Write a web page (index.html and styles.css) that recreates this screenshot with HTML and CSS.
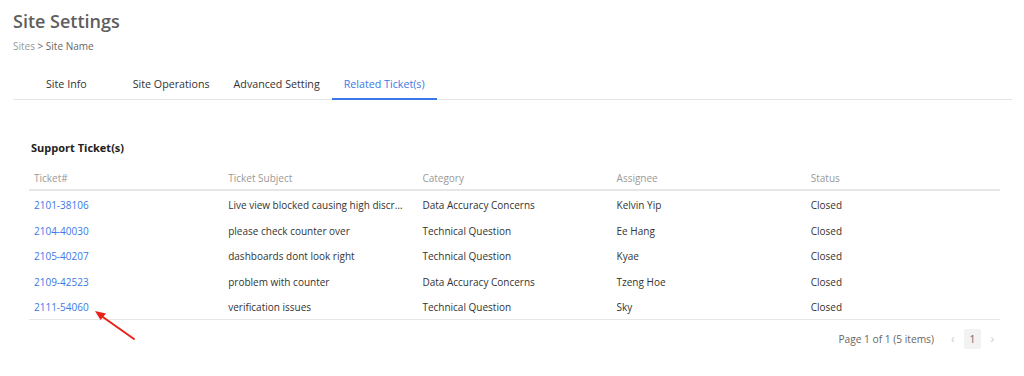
FILE: index.html
```html
<!DOCTYPE html>
<html lang="en">
  <head>
    <meta charset="UTF-8" />
    <meta name="viewport" content="width=device-width, initial-scale=1.0" />
    <title>Site Settings</title>
    <link rel="stylesheet" href="styles.css">
  </head>
  <body>
    <div class="page">
      <h1 class="title">Site Settings</h1>
      <div class="breadcrumb"><span class="crumb-root">Sites</span> &gt; Site Name</div>

      <div class="tabs">
        <div class="tab">Site Info</div>
        <div class="tab">Site Operations</div>
        <div class="tab">Advanced Setting</div>
        <div class="tab active">Related Ticket(s)</div>
      </div>

      <div class="panel">
        <div class="panel-title">Support Ticket(s)</div>
        <table class="grid">
          <thead>
            <tr>
              <th>Ticket#</th>
              <th>Ticket Subject</th>
              <th>Category</th>
              <th>Assignee</th>
              <th>Status</th>
            </tr>
          </thead>
          <tbody>
            <tr>
              <td><a href="#">2101-38106</a></td>
              <td>Live view blocked causing high discrepancy</td>
              <td>Data Accuracy Concerns</td>
              <td>Kelvin Yip</td>
              <td>Closed</td>
            </tr>
            <tr>
              <td><a href="#">2104-40030</a></td>
              <td>please check counter over</td>
              <td>Technical Question</td>
              <td>Ee Hang</td>
              <td>Closed</td>
            </tr>
            <tr>
              <td><a href="#">2105-40207</a></td>
              <td>dashboards dont look right</td>
              <td>Technical Question</td>
              <td>Kyae</td>
              <td>Closed</td>
            </tr>
            <tr>
              <td><a href="#">2109-42523</a></td>
              <td>problem with counter</td>
              <td>Data Accuracy Concerns</td>
              <td>Tzeng Hoe</td>
              <td>Closed</td>
            </tr>
            <tr>
              <td class="marked">
                <a href="#">2111-54060</a>
                <svg class="arrow" width="50" height="36" viewBox="0 0 50 36">
                  <line x1="44" y1="32" x2="10" y2="8" stroke="#e8231b" stroke-width="2" stroke-linecap="round" />
                  <polygon points="5,4 16,6.5 10.5,13" fill="#e8231b" />
                </svg>
              </td>
              <td>verification issues</td>
              <td>Technical Question</td>
              <td>Sky</td>
              <td>Closed</td>
            </tr>
          </tbody>
        </table>

        <div class="pager">
          <span class="pager-info">Page 1 of 1 (5 items)</span>
          <span class="pager-nav">&#8249;</span>
          <span class="pager-page">1</span>
          <span class="pager-nav">&#8250;</span>
        </div>
      </div>
    </div>
  </body>
</html>
```

FILE: styles.css
```css
body {
  margin: 0;
  background-color: #fff;
  font-family: "Open Sans", "Noto Sans", sans-serif;
  color: #333;
}

.page {
  padding: 9px 12px 0 13px;
}

.title {
  margin: 0;
  font-size: 18px;
  font-weight: 600;
  color: #5e5e5e;
  line-height: 24px;
}

.breadcrumb {
  margin-top: 6px;
  font-size: 10px;
  color: #666;
  line-height: 14px;
}

.crumb-root {
  color: #9a9a9a;
}

.tabs {
  display: flex;
  margin-top: 16px;
  border-bottom: 1px solid #e4e4e4;
}

.tab {
  padding: 8px 12px 7px;
  font-size: 10.7px;
  line-height: 14px;
  color: #333;
  border-bottom: 2px solid transparent;
  margin-bottom: -1px;
}

.tab:first-child {
  padding-left: 33px;
  padding-right: 34px;
}

.tab.active {
  color: #3b78e7;
  border-bottom-color: #3b78e7;
}

.panel {
  padding: 41px 12px 0 16px;
}

.panel-title {
  font-size: 11px;
  font-weight: 700;
  color: #222;
  line-height: 14px;
  padding-left: 2px;
}

.grid {
  width: 100%;
  margin-top: 10px;
  border-collapse: collapse;
  table-layout: fixed;
  font-size: 10px;
}

.grid th {
  text-align: left;
  font-weight: 400;
  color: #999;
  padding: 6px 5px 4px;
  line-height: 14px;
  border-bottom: 2px solid #e6e6e6;
}

.grid td {
  padding: 8px 10px 4px 5px;
  line-height: 13.5px;
  color: #333;
  white-space: nowrap;
  overflow: hidden;
  text-overflow: ellipsis;
}

.grid tbody tr:last-child td {
  border-bottom: 1px solid #e6e6e6;
}

.grid a {
  color: #3b78e7;
  text-decoration: none;
}

.grid td.marked {
  overflow: visible;
  position: relative;
}

.arrow {
  position: absolute;
  left: 61px;
  top: 14px;
}

.pager {
  display: flex;
  justify-content: flex-end;
  align-items: center;
  gap: 9px;
  margin-top: 9px;
  padding-right: 6px;
  font-size: 10.2px;
  color: #666;
}

.pager-info {
  margin-right: 8px;
}

.pager-nav {
  color: #ccc;
  font-size: 12px;
}

.pager-page {
  background-color: #f2f2f2;
  color: #666;
  padding: 3px 6px;
  border-radius: 2px;
}
```
